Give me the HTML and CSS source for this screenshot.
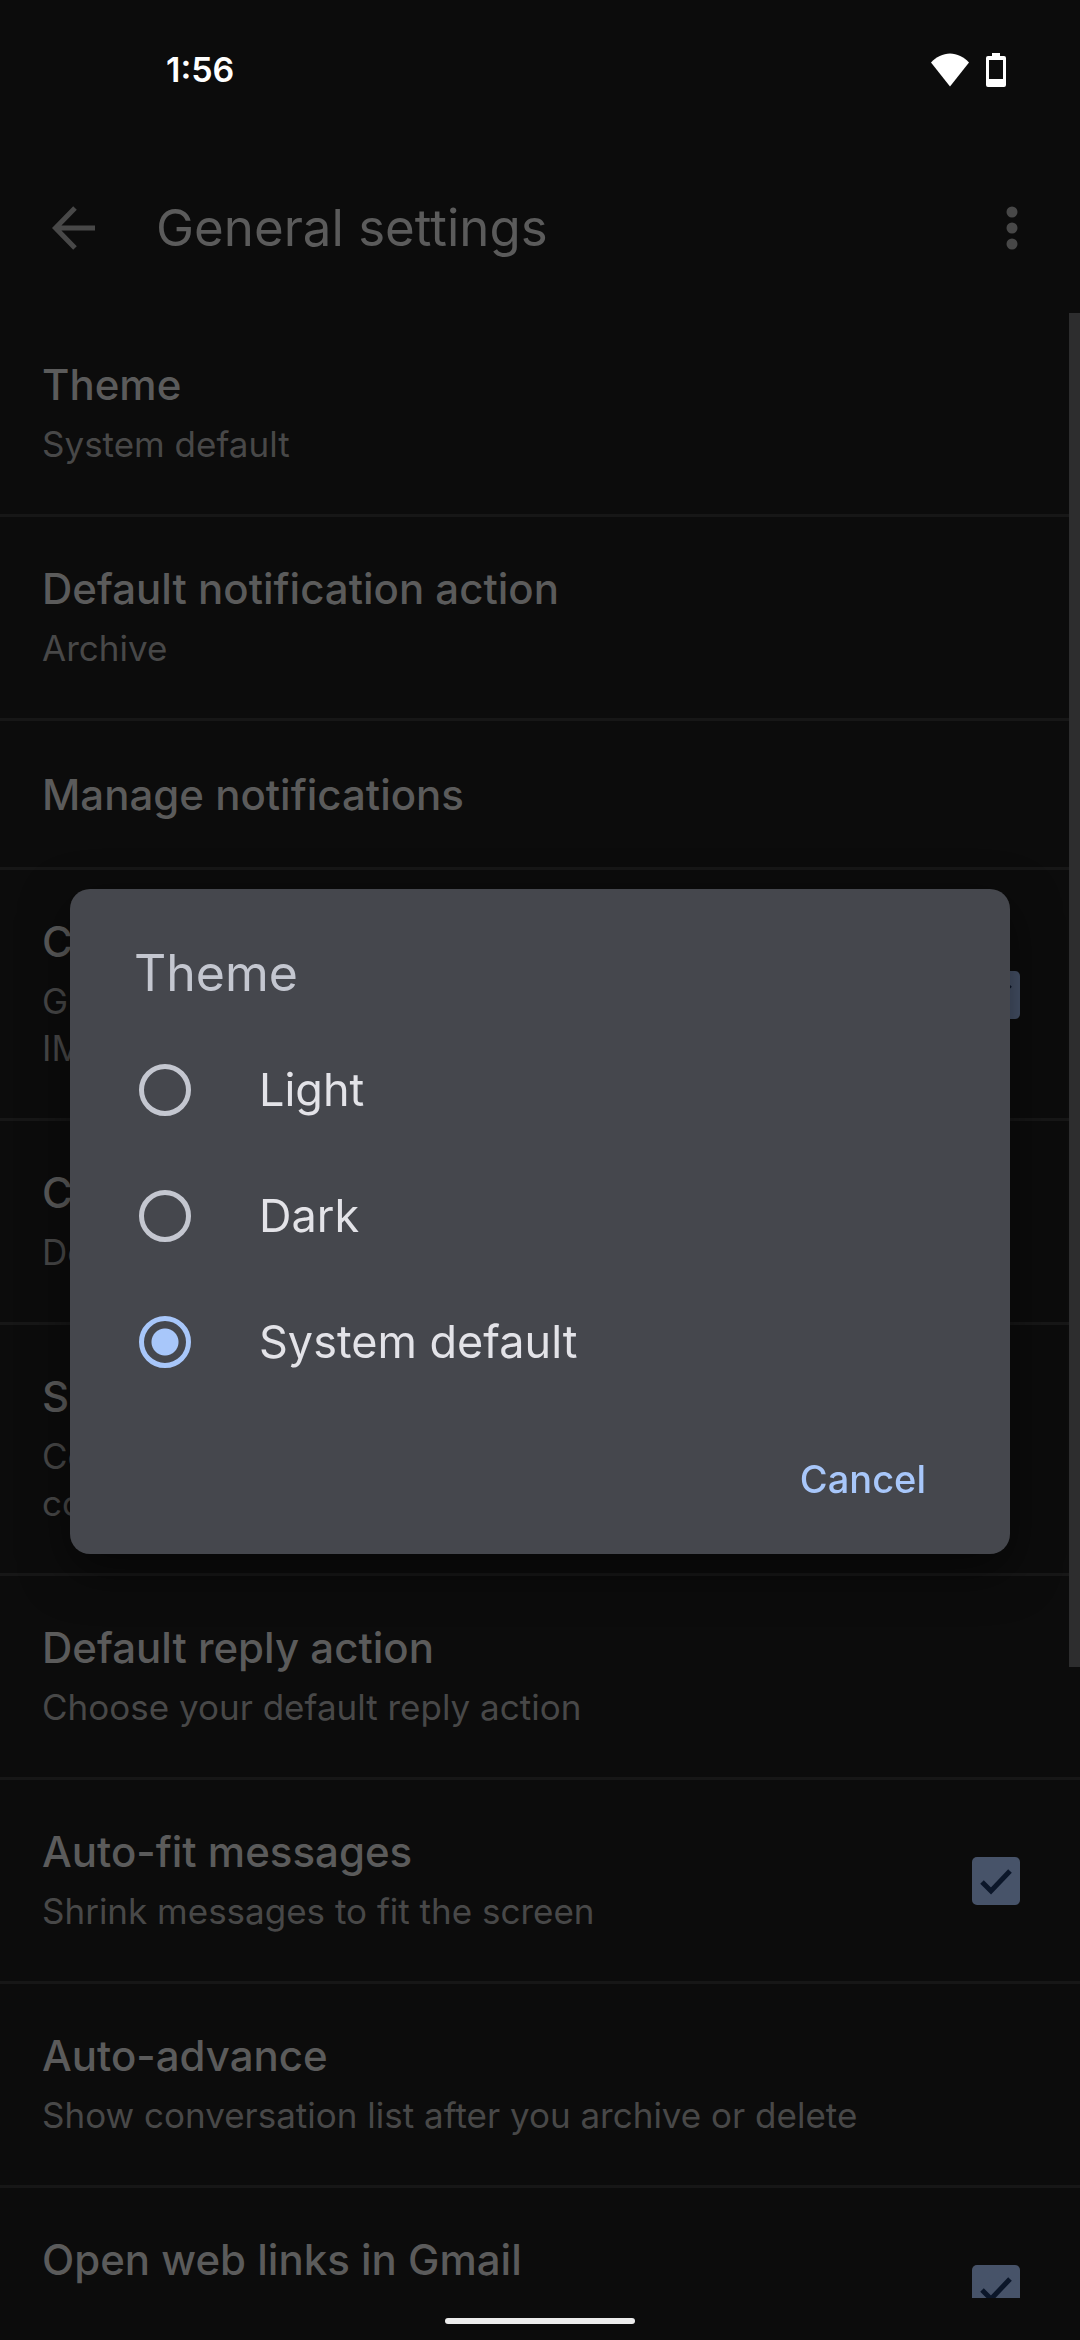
FILE: index.html
```
<!DOCTYPE html>
<html lang="en">
<head>
<meta charset="utf-8">
<meta name="viewport" content="width=device-width, initial-scale=1">
<title>General settings</title>
<link rel="stylesheet" href="styles.css">
</head>
<body>
<div class="screen">
  <header class="status-bar">
    <time class="clock">1:56</time>
    <div class="status-icons">
      <svg width="38" height="34" viewBox="0 0 38 34" aria-hidden="true"><path fill="#fff" d="M19 33.500L0 9.500C5 4 12 .5 19 .5S33 4 38 9.500z"/></svg>
      <svg width="20" height="34" viewBox="0 0 20 34" aria-hidden="true"><path fill="#fff" fill-rule="evenodd" d="M6 0h8v3h4a2 2 0 0 1 2 2v27a2 2 0 0 1-2 2H2a2 2 0 0 1-2-2V5a2 2 0 0 1 2-2h4zM3 7v19h14V7z"/></svg>
    </div>
  </header>

  <div class="app-bar">
    <button class="icon-button" type="button" aria-label="Back">
      <svg width="44" height="44" viewBox="0 0 44 44" aria-hidden="true"><path fill="none" stroke="#484848" stroke-width="5" d="M43 22H4M23 2L3.500 22 23 42"/></svg>
    </button>
    <h1 class="app-title">General settings</h1>
    <button class="icon-button" type="button" aria-label="More options">
      <svg width="12" height="44" viewBox="0 0 12 44" aria-hidden="true"><g fill="#484848"><circle cx="6" cy="6" r="5.500"/><circle cx="6" cy="22" r="5.500"/><circle cx="6" cy="38" r="5.500"/></g></svg>
    </button>
  </div>

  <main class="list-area">
    <ul class="settings">
      <li class="row"><div class="row-text"><h2 class="row-title">Theme</h2><p class="row-sub">System default</p></div></li>
      <li class="row"><div class="row-text"><h2 class="row-title">Default notification action</h2><p class="row-sub">Archive</p></div></li>
      <li class="row row-single"><div class="row-text"><h2 class="row-title">Manage notifications</h2></div></li>
      <li class="row">
        <label class="row-text" for="conversation"><span class="row-title">Conversation view</span><span class="row-sub">Group emails in the same conversation for Gmail, IMAP, POP3, and Exchange accounts</span></label>
        <input class="check" type="checkbox" id="conversation" checked>
      </li>
      <li class="row"><div class="row-text"><h2 class="row-title">Conversation list density</h2><p class="row-sub">Default</p></div></li>
      <li class="row"><div class="row-text"><h2 class="row-title">Swipe actions</h2><p class="row-sub">Configure swipe actions to quickly act on emails in the conversation list</p></div></li>
      <li class="row"><div class="row-text"><h2 class="row-title">Default reply action</h2><p class="row-sub">Choose your default reply action</p></div></li>
      <li class="row">
        <label class="row-text" for="autofit"><span class="row-title">Auto-fit messages</span><span class="row-sub">Shrink messages to fit the screen</span></label>
        <input class="check" type="checkbox" id="autofit" checked>
      </li>
      <li class="row"><div class="row-text"><h2 class="row-title">Auto-advance</h2><p class="row-sub">Show conversation list after you archive or delete</p></div></li>
      <li class="row row-tall">
        <label class="row-text" for="weblinks"><span class="row-title">Open web links in Gmail</span></label>
        <input class="check" type="checkbox" id="weblinks" checked>
      </li>
    </ul>
    <div class="scroll-thumb"></div>
  </main>

  <footer class="nav-bar"><div class="nav-pill"></div></footer>
</div>

<div class="overlay">
  <form class="dialog" role="dialog" aria-labelledby="dialog-title">
    <h2 class="dialog-title" id="dialog-title">Theme</h2>
    <div class="options">
      <label class="option"><input class="radio" type="radio" name="theme">Light</label>
      <label class="option"><input class="radio" type="radio" name="theme">Dark</label>
      <label class="option"><input class="radio" type="radio" name="theme" checked>System default</label>
    </div>
    <div class="actions"><button class="cancel" type="button">Cancel</button></div>
  </form>
</div>
</body>
</html>
```
FILE: styles.css
```
* { box-sizing: border-box; }

body {
  margin: 0;
  background: #0c0c0c;
  color: #5b5b5b;
  font-family: Inter, "Liberation Sans", sans-serif;
}

h1, h2, p, ul { margin: 0; padding: 0; }

button {
  border: 0;
  padding: 0;
  background: none;
  font: inherit;
}

.screen {
  display: flex;
  flex-direction: column;
  height: 100vh;
}

/* Status bar */
.status-bar {
  display: flex;
  flex: none;
  align-items: center;
  justify-content: space-between;
  height: 144px;
  padding: 0 74px 4px 166px;
}

.clock {
  color: #fff;
  font-size: 34px;
  font-weight: 600;
  line-height: 42px;
}

.status-icons { display: flex; gap: 17px; }

/* App bar */
.app-bar {
  display: flex;
  flex: none;
  align-items: center;
  height: 169px;
  padding: 0 62px 2px 52px;
}

.icon-button { display: flex; }

.app-title {
  flex: 1;
  margin-left: 60px;
  font-size: 51px;
  font-weight: 400;
  line-height: 60px;
}

/* Settings list */
.list-area {
  position: relative;
  flex: 1;
  min-height: 0;
  overflow: hidden;
}

.settings { list-style: none; }

.row {
  display: flex;
  align-items: center;
  gap: 60px;
  padding: 47px 60px 46px 42px;
  border-bottom: 3px solid #171717;
}

.row-single { min-height: 149px; }

.row-tall { height: 204px; }
.row-tall .row-text { align-self: flex-start; }

.row-text {
  display: flex;
  flex: 1;
  flex-direction: column;
  gap: 11px;
}

.row-title {
  font-size: 42px;
  font-weight: 500;
  line-height: 50px;
}

.row-sub {
  color: #484848;
  font-size: 35px;
  line-height: 47px;
}

.check {
  appearance: none;
  flex: none;
  width: 48px;
  height: 48px;
  margin: 0;
  border-radius: 5px;
}

.check:checked {
  background: #475369 url("data:image/svg+xml,%3Csvg xmlns='http://www.w3.org/2000/svg' viewBox='0 0 48 48'%3E%3Cpath d='M10 25l9 9 19-20' fill='none' stroke='%230b1629' stroke-width='5'/%3E%3C/svg%3E") center / contain no-repeat;
}

.scroll-thumb {
  position: absolute;
  top: 0;
  right: 0;
  width: 11px;
  height: 1354px;
  background: #2d2d2e;
}

/* Gesture bar */
.nav-bar {
  display: flex;
  flex: none;
  justify-content: center;
  height: 42px;
  padding-top: 20px;
}

.nav-pill {
  width: 190px;
  height: 6px;
  border-radius: 3px;
  background: #ececec;
}

/* Dialog */
.overlay {
  position: fixed;
  inset: 0;
  display: flex;
  align-items: center;
  justify-content: center;
  padding: 144px 70px 42px;
}

.dialog {
  flex: 1;
  padding: 54px 64px 22px;
  border-radius: 20px;
  background: #45474d;
  box-shadow: 0 16px 48px rgba(0, 0, 0, .5);
}

.dialog-title {
  color: #c4c7d0;
  font-size: 50px;
  font-weight: 400;
  line-height: 60px;
}

.options { padding-top: 24px; }

.option {
  display: flex;
  align-items: center;
  gap: 68px;
  height: 126px;
  padding-left: 5px;
  color: #e3e3e8;
  font-size: 45px;
  line-height: 54px;
}

.radio {
  appearance: none;
  width: 52px;
  height: 52px;
  margin: 0;
  border: 5px solid #c4c7d0;
  border-radius: 50%;
}

.radio:checked {
  border-color: #a8c7fa;
  background: radial-gradient(circle, #a8c7fa 13px, transparent 14px);
}

.actions {
  display: flex;
  justify-content: flex-end;
  padding-top: 21px;
}

.cancel {
  padding: 30px 20px;
  color: #a8c7fa;
  font-size: 38px;
  font-weight: 500;
  line-height: 46px;
}
```
